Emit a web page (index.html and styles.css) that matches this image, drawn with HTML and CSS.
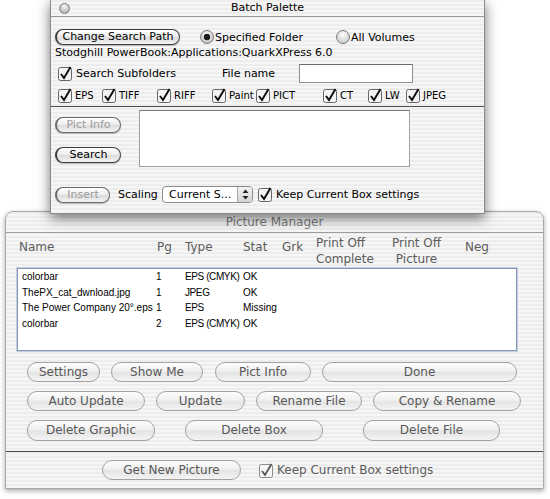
FILE: index.html
```html
<!DOCTYPE html>
<html lang="en">
  <head>
    <meta charset="UTF-8" />
    <title>Batch Palette</title>
    <link rel="stylesheet" href="styles.css">
  </head>

  <body>
    <div class="window manager">
      <div class="title">Picture Manager</div>
      <div class="headers">
        <div class="one">Name</div>
        <div class="one">Pg</div>
        <div class="one">Type</div>
        <div class="one">Stat</div>
        <div class="one">Grk</div>
        <div>Print Off<br>Complete</div>
        <div class="center">Print Off<br>Picture</div>
        <div class="one">Neg</div>
      </div>
      <div class="list">
        <div class="item"><span>colorbar</span><span>1</span><span class="type">EPS (CMYK)</span><span>OK</span></div>
        <div class="item"><span>ThePX_cat_dwnload.jpg</span><span>1</span><span class="type">JPEG</span><span>OK</span></div>
        <div class="item"><span>The Power Company 20°.eps</span><span>1</span><span class="type">EPS</span><span>Missing</span></div>
        <div class="item"><span>colorbar</span><span>2</span><span class="type">EPS (CMYK)</span><span>OK</span></div>
      </div>
      <div class="btns">
        <div class="btn-row r1">
          <div class="btn">Settings</div>
          <div class="btn">Show Me</div>
          <div class="btn">Pict Info</div>
          <div class="btn">Done</div>
        </div>
        <div class="btn-row r2">
          <div class="btn">Auto Update</div>
          <div class="btn">Update</div>
          <div class="btn">Rename File</div>
          <div class="btn">Copy &amp; Rename</div>
        </div>
        <div class="btn-row r3">
          <div class="btn">Delete Graphic</div>
          <div class="btn">Delete Box</div>
          <div class="btn">Delete File</div>
        </div>
      </div>
      <div class="footer">
        <div class="btn get-new">Get New Picture</div>
        <label class="check keep">
          <svg class="cb" width="15" height="15" viewBox="0 0 15 15"><rect x="0.5" y="1.5" width="13" height="13" rx="2" fill="#f6f6f6" stroke="#8a8a8a"/><path d="M3 8 L6 12 L12.5 1" fill="none" stroke="#555" stroke-width="1.8"/></svg>
          Keep Current Box settings
        </label>
      </div>
    </div>

    <div class="window palette">
      <div class="titlebar">
        <span class="close"></span>
        Batch Palette
      </div>

      <div class="p-row first">
        <div class="pbtn change">Change Search Path</div>
        <label class="radio-label"><span class="radio on"></span>Specified Folder</label>
        <label class="radio-label all"><span class="radio"></span>All Volumes</label>
      </div>

      <div class="p-row path">Stodghill PowerBook:Applications:QuarkXPress 6.0</div>

      <div class="p-row search">
        <label class="check sub">
          <svg class="cb" width="15" height="15" viewBox="0 0 15 15"><rect x="0.5" y="1.5" width="13" height="13" rx="2" fill="#f4f4f4" stroke="#666"/><path d="M3 8 L6 12 L12.5 1" fill="none" stroke="#111" stroke-width="2"/></svg>
          Search Subfolders
        </label>
        <span class="fname">File name</span>
        <span class="field"></span>
      </div>

      <div class="p-row types">
        <label class="check"><svg class="cb" width="15" height="15" viewBox="0 0 15 15"><rect x="0.5" y="1.5" width="13" height="13" rx="2" fill="#f4f4f4" stroke="#666"/><path d="M3 8 L6 12 L12.5 1" fill="none" stroke="#111" stroke-width="2"/></svg>EPS</label>
        <label class="check"><svg class="cb" width="15" height="15" viewBox="0 0 15 15"><rect x="0.5" y="1.5" width="13" height="13" rx="2" fill="#f4f4f4" stroke="#666"/><path d="M3 8 L6 12 L12.5 1" fill="none" stroke="#111" stroke-width="2"/></svg>TIFF</label>
        <label class="check"><svg class="cb" width="15" height="15" viewBox="0 0 15 15"><rect x="0.5" y="1.5" width="13" height="13" rx="2" fill="#f4f4f4" stroke="#666"/><path d="M3 8 L6 12 L12.5 1" fill="none" stroke="#111" stroke-width="2"/></svg>RIFF</label>
        <label class="check"><svg class="cb" width="15" height="15" viewBox="0 0 15 15"><rect x="0.5" y="1.5" width="13" height="13" rx="2" fill="#f4f4f4" stroke="#666"/><path d="M3 8 L6 12 L12.5 1" fill="none" stroke="#111" stroke-width="2"/></svg>Paint</label>
        <label class="check"><svg class="cb" width="15" height="15" viewBox="0 0 15 15"><rect x="0.5" y="1.5" width="13" height="13" rx="2" fill="#f4f4f4" stroke="#666"/><path d="M3 8 L6 12 L12.5 1" fill="none" stroke="#111" stroke-width="2"/></svg>PICT</label>
        <label class="check"><svg class="cb" width="15" height="15" viewBox="0 0 15 15"><rect x="0.5" y="1.5" width="13" height="13" rx="2" fill="#f4f4f4" stroke="#666"/><path d="M3 8 L6 12 L12.5 1" fill="none" stroke="#111" stroke-width="2"/></svg>CT</label>
        <label class="check"><svg class="cb" width="15" height="15" viewBox="0 0 15 15"><rect x="0.5" y="1.5" width="13" height="13" rx="2" fill="#f4f4f4" stroke="#666"/><path d="M3 8 L6 12 L12.5 1" fill="none" stroke="#111" stroke-width="2"/></svg>LW</label>
        <label class="check"><svg class="cb" width="15" height="15" viewBox="0 0 15 15"><rect x="0.5" y="1.5" width="13" height="13" rx="2" fill="#f4f4f4" stroke="#666"/><path d="M3 8 L6 12 L12.5 1" fill="none" stroke="#111" stroke-width="2"/></svg>JPEG</label>
      </div>

      <div class="divider"></div>

      <div class="p-row results">
        <div class="side">
          <div class="pbtn off">Pict Info</div>
          <div class="pbtn">Search</div>
        </div>
        <div class="found"></div>
      </div>

      <div class="p-row last">
        <div class="pbtn off insert">Insert</div>
        <span class="scaling">Scaling</span>
        <span class="select">
          <span class="sel-text">Current S...</span>
          <span class="arrows">
            <svg width="7" height="11" viewBox="0 0 7 11"><path d="M3.5 0.5 L6.5 4 L0.5 4 Z M0.5 7 L6.5 7 L3.5 10.5 Z" fill="#222"/></svg>
          </span>
        </span>
        <label class="check keep-small">
          <svg class="cb" width="15" height="15" viewBox="0 0 15 15"><rect x="0.5" y="1.5" width="13" height="13" rx="2" fill="#f4f4f4" stroke="#666"/><path d="M3 8 L6 12 L12.5 1" fill="none" stroke="#111" stroke-width="2"/></svg>
          Keep Current Box settings
        </label>
      </div>
    </div>
  </body>
</html>
```

FILE: styles.css
```css
* {
  padding: 0;
  margin: 0;
  box-sizing: border-box;
}

body {
  width: 550px;
  height: 499px;
  position: relative;
  overflow: hidden;
  background: white;
  font-family: "DejaVu Sans", sans-serif;
}

.window {
  position: absolute;
  background: repeating-linear-gradient(#ededed 0 2px, #f6f6f6 2px 4px);
}

/* picture manager (back window) */

.manager {
  left: 5px;
  top: 211px;
  width: 539px;
  height: 278px;
  border: 1px solid #a9a9a9;
  border-radius: 8px 8px 0 0;
  box-shadow: 0 2px 5px rgba(0, 0, 0, 0.35);
  color: #5c5c5c;
  font-size: 12px;
}

.manager .title {
  height: 21px;
  line-height: 20px;
  text-align: center;
  color: #7c7c7c;
  border-bottom: 1px solid #9d9d9d;
}

.headers {
  height: 35px;
  display: grid;
  grid-template-columns: 138px 28px 58px 39px 34px 75px 74px auto;
  padding: 2px 0 0 13px;
  line-height: 16px;
  white-space: nowrap;
}

.headers .one {
  padding-top: 4px;
}

.headers .center {
  text-align: center;
  width: 51px;
}

.list {
  height: 83px;
  margin: 0 26px 0 11px;
  background: white;
  border: 1px solid #8697b6;
  box-shadow: 0 0 0 1px #c3cedf;
  padding-left: 4px;
}

.item {
  display: grid;
  grid-template-columns: 134px 29px 58px auto;
  font-family: "Liberation Sans", sans-serif;
  font-size: 10px;
  line-height: 15.6px;
  color: black;
  white-space: nowrap;
}

.item .type {
  letter-spacing: -0.4px;
}

.btns {
  padding: 11px 0 0 21px;
}

.btn-row {
  display: flex;
  margin-bottom: 9px;
}

.btn-row:last-child {
  margin-bottom: 0;
}

.btn {
  height: 20px;
  line-height: 18px;
  text-align: center;
  border: 1px solid #a2a2a2;
  border-radius: 10px;
  background: linear-gradient(#fdfdfd, #f0f0f0 45%, #e4e4e4 55%, #f4f4f4);
  color: #585858;
}

.r1 { gap: 11px; }
.r1 .btn:nth-child(1) { width: 73px; }
.r1 .btn:nth-child(2) { width: 92px; }
.r1 .btn:nth-child(3) { width: 96px; margin-left: 1px; }
.r1 .btn:nth-child(4) { width: 195px; }

.r2 { gap: 11px; }
.r2 .btn:nth-child(1) { width: 118px; }
.r2 .btn:nth-child(2) { width: 89px; }
.r2 .btn:nth-child(3) { width: 106px; }
.r2 .btn:nth-child(4) { width: 148px; }

.r3 .btn { height: 21px; line-height: 19px; }
.r3 .btn:nth-child(1) { width: 128px; }
.r3 .btn:nth-child(2) { width: 138px; margin-left: 30px; }
.r3 .btn:nth-child(3) { width: 137px; margin-left: 40px; }

.footer {
  margin-top: 10px;
  border-top: 1px solid #4a4a4a;
  padding: 8px 0 0 96px;
  display: flex;
  align-items: center;
}

.get-new {
  width: 139px;
}

.check {
  display: flex;
  align-items: center;
  gap: 3px;
  white-space: nowrap;
}

.cb {
  flex: none;
}

.keep {
  margin-left: 18px;
  color: #5c5c5c;
}

/* batch palette (front window) */

.palette {
  left: 50px;
  top: 0;
  width: 435px;
  height: 214px;
  border: 1px solid #8c8c8c;
  border-top: none;
  box-shadow: 0 4px 12px rgba(0, 0, 0, 0.55);
  font-size: 11px;
  color: black;
}

.titlebar {
  position: relative;
  height: 17px;
  line-height: 16px;
  text-align: center;
  font-size: 11px;
  border-bottom: 1px solid #9a9a9a;
}

.close {
  position: absolute;
  left: 8px;
  top: 3px;
  width: 11px;
  height: 11px;
  border-radius: 50%;
  border: 1px solid #7d7d7d;
  background: radial-gradient(circle at 50% 30%, #fafafa, #b8b8b8 70%);
}

.p-row {
  padding: 0 0 0 4px;
  display: flex;
  align-items: center;
}

.first {
  margin-top: 12px;
  height: 16px;
}

.pbtn {
  height: 16px;
  line-height: 14px;
  text-align: center;
  border: 1px solid #3e3e3e;
  border-left-width: 2px;
  border-radius: 8px;
  background: linear-gradient(#ffffff, #eeeeee 45%, #dcdcdc 55%, #f4f4f4);
  box-shadow: 0 1px 1px rgba(0, 0, 0, 0.25);
}

.pbtn.off {
  color: #9a9a9a;
  border-color: #6a6a6a;
}

.change {
  width: 125px;
}

.radio-label {
  display: flex;
  align-items: center;
  gap: 1px;
  margin-left: 20px;
}

.radio-label.all {
  margin-left: 33px;
}

.radio {
  width: 14px;
  height: 14px;
  border-radius: 50%;
  border: 1px solid #7a7a7a;
  background: radial-gradient(circle at 50% 30%, #ffffff, #d0d0d0 75%);
}

.radio.on {
  background: radial-gradient(circle, #1e1e1e 0 3px, transparent 3.6px),
    radial-gradient(circle at 50% 30%, #ffffff, #c4c4c4 75%);
}

.path {
  margin-top: 1px;
  height: 13px;
  line-height: 13px;
}

.search {
  margin-top: 5px;
  height: 19px;
}

.sub {
  width: 167px;
  padding-left: 3px;
}

.fname {
  width: 77px;
}

.field {
  width: 114px;
  height: 19px;
  background: white;
  border: 1px solid #8e8e8e;
  border-top-color: #6c6c6c;
}

.types {
  margin-top: 5px;
  height: 15px;
  display: grid;
  grid-template-columns: 44px 55px 55px 44px 67px 45px 38px auto;
  padding-left: 7px;
  font-size: 10px;
}

.types .check {
  gap: 2px;
}

.divider {
  margin-top: 3px;
  border-top: 1px solid #4d4d4d;
}

.results {
  margin-top: 3px;
  align-items: flex-start;
}

.side {
  width: 84px;
  padding-top: 7px;
}

.side .pbtn {
  width: 66px;
  margin-bottom: 14px;
}

.found {
  width: 271px;
  height: 57px;
  background: white;
  border: 1px solid #a0a0a0;
  border-top-color: #7a7a7a;
}

.last {
  margin-top: 9px;
  height: 17px;
}

.insert {
  width: 55px;
}

.scaling {
  margin-left: 8px;
  width: 44px;
}

.select {
  width: 91px;
  height: 17px;
  display: flex;
  background: white;
  border: 1px solid #8c8c8c;
  border-radius: 4px;
  overflow: hidden;
}

.sel-text {
  flex: 1;
  padding-left: 6px;
  line-height: 16px;
}

.arrows {
  width: 15px;
  display: flex;
  align-items: center;
  justify-content: center;
  border-left: 1px solid #a8a8a8;
  background: linear-gradient(#f2f2f2, #d4d4d4);
}

.keep-small {
  margin-left: 5px;
  gap: 3px;
}
```
